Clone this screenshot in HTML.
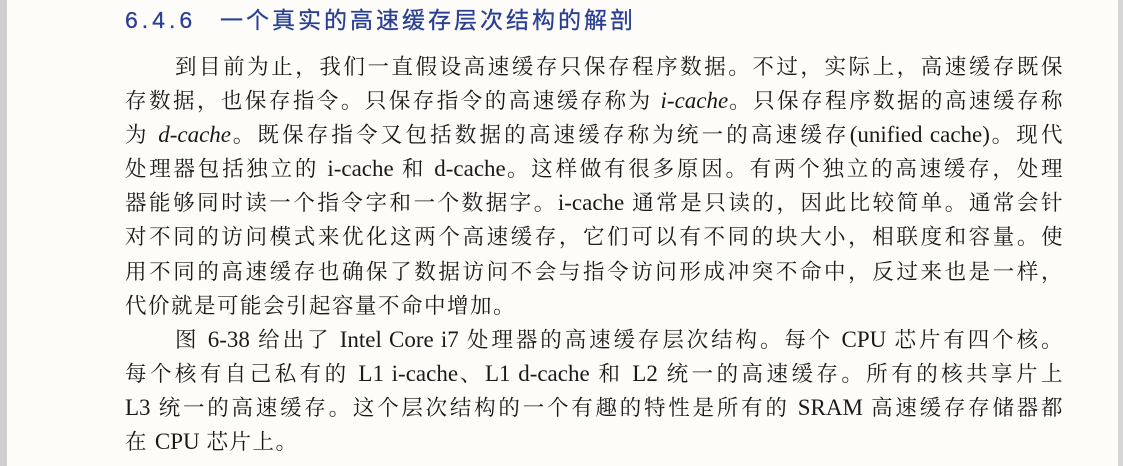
<!DOCTYPE html>
<html><head><meta charset="utf-8"><style>
html,body{margin:0;padding:0;}
body{width:1123px;height:466px;background:#fdfcf9;position:relative;overflow:hidden;}
.ls{position:absolute;left:0;top:0;width:7px;height:466px;background:#cfcfcf;}
.rs{position:absolute;right:0;top:0;width:5px;height:466px;background:#d6d6d6;}
h1{position:absolute;left:125px;top:4px;margin:0;font:400 23px/32px "Liberation Sans","Noto Sans CJK SC",sans-serif;color:#2a3f93;white-space:nowrap;letter-spacing:3px;-webkit-text-stroke:0.3px #2a3f93;}
h1 span{display:inline-block;width:95px;letter-spacing:4px;}
.t{position:absolute;left:125px;width:939px;font:400 21.5px/34.1px "Liberation Serif","Noto Serif CJK SC",serif;color:#1a1a1a;}
.l{height:34.1px;white-space:nowrap;text-align:justify;text-align-last:justify;letter-spacing:1.5px;}
.l.n{text-align-last:left;}
.in{padding-left:50px;}
i{font-style:italic;}
.e{font-size:23px;letter-spacing:0;}
</style></head><body>
<div class="ls"></div><div class="rs"></div>
<h1><span>6.4.6</span>一个真实的高速缓存层次结构的解剖</h1>
<div class="t" style="top:50px">
<div class="l in">到目前为止，我们一直假设高速缓存只保存程序数据。不过，实际上，高速缓存既保</div>
<div class="l">存数据，也保存指令。只保存指令的高速缓存称为 <i class="e">i-cache</i>。只保存程序数据的高速缓存称</div>
<div class="l">为 <i class="e">d-cache</i>。既保存指令又包括数据的高速缓存称为统一的高速缓存<span class="e">(unified cache)</span>。现代</div>
<div class="l">处理器包括独立的 <span class="e">i-cache</span> 和 <span class="e">d-cache</span>。这样做有很多原因。有两个独立的高速缓存，处理</div>
<div class="l">器能够同时读一个指令字和一个数据字。<span class="e">i-cache</span> 通常是只读的，因此比较简单。通常会针</div>
<div class="l">对不同的访问模式来优化这两个高速缓存，它们可以有不同的块大小，相联度和容量。使</div>
<div class="l">用不同的高速缓存也确保了数据访问不会与指令访问形成冲突不命中，反过来也是一样，</div>
<div class="l n">代价就是可能会引起容量不命中增加。</div>
<div class="l in">图 <span class="e">6-38</span> 给出了 <span class="e">Intel Core i7</span> 处理器的高速缓存层次结构。每个 <span class="e">CPU</span> 芯片有四个核。</div>
<div class="l">每个核有自己私有的 <span class="e">L1 i-cache</span>、<span class="e">L1 d-cache</span> 和 <span class="e">L2</span> 统一的高速缓存。所有的核共享片上</div>
<div class="l"><span class="e">L3</span> 统一的高速缓存。这个层次结构的一个有趣的特性是所有的 <span class="e">SRAM</span> 高速缓存存储器都</div>
<div class="l n">在 <span class="e">CPU</span> 芯片上。</div>
</div>
</body></html>
